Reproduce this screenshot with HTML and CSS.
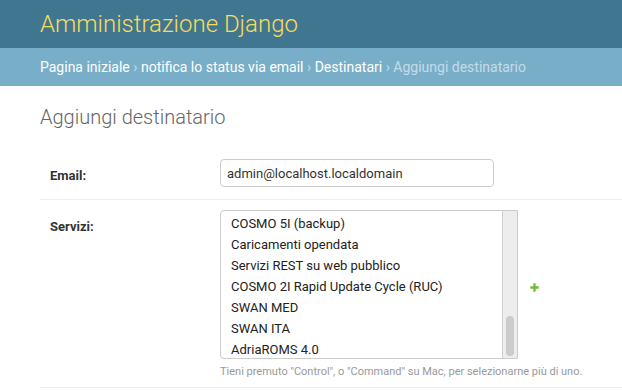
FILE: index.html
```html
<!DOCTYPE html>
<html lang="it">

<head>
  <meta charset="UTF-8" />
  <meta name="viewport" content="width=device-width, initial-scale=1.0" />
  <title>Aggiungi destinatario | Amministrazione Django</title>
  <link rel="stylesheet" href="styles.css">
</head>

<body>

  <!-- Header -->
  <div id="header">
    <div id="branding">
      <h1 id="site-name"><a href="#">Amministrazione Django</a></h1>
    </div>
  </div>

  <!-- Breadcrumbs -->
  <div class="breadcrumbs">
    <a href="#">Pagina iniziale</a>
    &rsaquo; <a href="#">notifica lo status via email</a>
    &rsaquo; <a href="#">Destinatari</a>
    &rsaquo; Aggiungi destinatario
  </div>

  <div id="content">
    <h1>Aggiungi destinatario</h1>

    <form>
      <fieldset class="module aligned">

        <div class="form-row field-email">
          <label class="required" for="id_email">Email:</label>
          <input type="email" id="id_email" class="vTextField" value="admin@localhost.localdomain">
        </div>

        <div class="form-row field-servizi">
          <label class="required">Servizi:</label>
          <div class="field-box">
            <div class="related-widget-wrapper">
              <div class="listbox">
                <ul class="options">
                  <li>COSMO 5I (backup)</li>
                  <li>Caricamenti opendata</li>
                  <li>Servizi REST su web pubblico</li>
                  <li>COSMO 2I Rapid Update Cycle (RUC)</li>
                  <li>SWAN MED</li>
                  <li>SWAN ITA</li>
                  <li>AdriaROMS 4.0</li>
                </ul>
                <div class="scroll-track">
                  <div class="scroll-thumb"></div>
                </div>
              </div>
              <a href="#" class="add-related" title="Aggiungi un altro servizio">
                <svg width="11" height="11" viewBox="0 0 1792 1792">
                  <path fill="#70bf2b" d="M1600 796v192q0 40-28 68t-68 28h-416v416q0 40-28 68t-68 28h-192q-40 0-68-28t-28-68v-416h-416q-40 0-68-28t-28-68v-192q0-40 28-68t68-28h416v-416q0-40 28-68t68-28h192q40 0 68 28t28 68v416h416q40 0 68 28t28 68z" />
                </svg>
              </a>
            </div>
            <div class="help">Tieni premuto "Control", o "Command" su Mac, per selezionarne più di uno.</div>
          </div>
        </div>

      </fieldset>
    </form>
  </div>

</body>

</html>
```

FILE: styles.css
```css
body {
  margin: 0;
  padding: 0;
  font-family: Roboto, "DejaVu Sans", Arial, sans-serif;
  font-size: 14px;
  color: #333;
  background: #fff;
}

a {
  text-decoration: none;
}

/* Header */

#header {
  display: flex;
  align-items: center;
  height: 48px;
  padding: 0 40px;
  background: #417690;
  box-sizing: border-box;
}

#site-name {
  margin: 0;
  font-size: 24px;
  font-weight: 300;
  line-height: 28px;
}

#site-name a {
  color: #f5dd5d;
}

/* Breadcrumbs */

.breadcrumbs {
  background: #79aec8;
  padding: 10px 40px;
  font-size: 14px;
  line-height: 18px;
  color: #c4dce8;
}

.breadcrumbs a {
  color: #fff;
}

/* Content */

#content {
  padding: 20px 0 0 40px;
}

#content h1 {
  margin: 0 0 20px;
  font-size: 20px;
  font-weight: 300;
  line-height: 23px;
  color: #666;
}

fieldset {
  margin: 0;
  padding: 0;
  border: none;
}

.form-row {
  display: flex;
  align-items: flex-start;
  padding: 10px 10px 12px;
  font-size: 13px;
  border-bottom: 1px solid #eee;
}

.form-row.field-servizi {
  padding-bottom: 9px;
}

.aligned label {
  width: 170px;
  flex-shrink: 0;
  padding-top: 10px;
  line-height: 13px;
}

.required {
  color: #333;
  font-weight: bold;
}

.vTextField {
  width: 274px;
  height: 28px;
  box-sizing: border-box;
  padding: 5px 6px;
  margin: 0;
  border: 1px solid #ccc;
  border-radius: 4px;
  font-family: Roboto, "DejaVu Sans", Arial, sans-serif;
  font-size: 13px;
  color: #333;
}

/* Multiple select */

.related-widget-wrapper {
  display: flex;
  align-items: center;
}

.listbox {
  display: flex;
  width: 298px;
  height: 149px;
  box-sizing: border-box;
  border: 1px solid #ccc;
  border-radius: 4px 0 0 4px;
  overflow: hidden;
}

.options {
  flex: 1;
  list-style: none;
  margin: 0;
  padding: 2px 0 0;
}

.options li {
  height: 21px;
  line-height: 21px;
  padding-left: 10px;
  font-size: 13px;
  color: #222;
  white-space: nowrap;
}

.scroll-track {
  width: 14px;
  display: flex;
  flex-direction: column;
  justify-content: flex-end;
  align-items: center;
  padding-bottom: 2px;
  background: #ededed;
  border-left: 1px solid #cfcfcf;
}

.scroll-thumb {
  width: 8px;
  height: 40px;
  border-radius: 4px;
  background: #cbcbcb;
}

.add-related {
  display: flex;
  margin-left: 11px;
  margin-top: 5px;
}

.help {
  margin-top: 6px;
  font-size: 11px;
  line-height: 13px;
  color: #999;
}
```
